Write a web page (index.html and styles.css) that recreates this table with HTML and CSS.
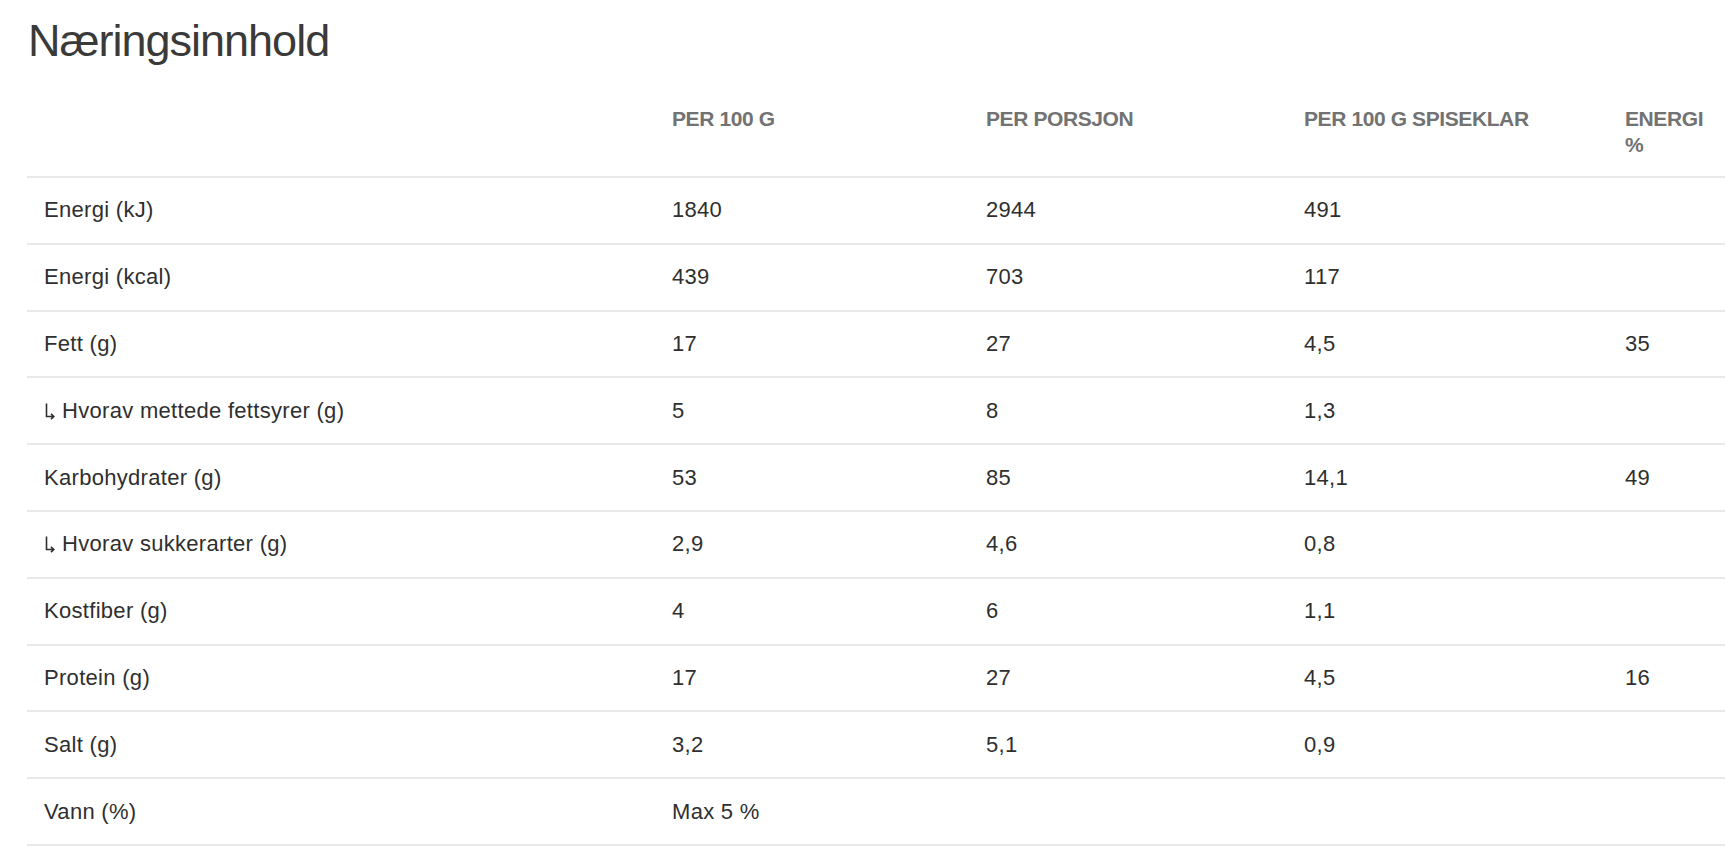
FILE: index.html
```html
<!DOCTYPE html>
<html lang="no">
<head>
<meta charset="utf-8">
<title>Næringsinnhold</title>
<link rel="stylesheet" href="styles.css">
</head>
<body>
<section class="nutrition">
  <h2 class="nutrition__title">Næringsinnhold</h2>
  <div class="ntable">
    <div class="ntable__row ntable__row--head">
      <div class="ntable__cell"></div>
      <div class="ntable__cell">PER 100 G</div>
      <div class="ntable__cell">PER PORSJON</div>
      <div class="ntable__cell">PER 100 G SPISEKLAR</div>
      <div class="ntable__cell">ENERGI %</div>
    </div>
    <div class="ntable__row">
      <div class="ntable__cell">Energi (kJ)</div>
      <div class="ntable__cell">1840</div>
      <div class="ntable__cell">2944</div>
      <div class="ntable__cell">491</div>
      <div class="ntable__cell"></div>
    </div>
    <div class="ntable__row">
      <div class="ntable__cell">Energi (kcal)</div>
      <div class="ntable__cell">439</div>
      <div class="ntable__cell">703</div>
      <div class="ntable__cell">117</div>
      <div class="ntable__cell"></div>
    </div>
    <div class="ntable__row">
      <div class="ntable__cell">Fett (g)</div>
      <div class="ntable__cell">17</div>
      <div class="ntable__cell">27</div>
      <div class="ntable__cell">4,5</div>
      <div class="ntable__cell">35</div>
    </div>
    <div class="ntable__row">
      <div class="ntable__cell"><svg class="ntable__sub" viewBox="0 0 12 20" aria-hidden="true"><path d="M2.5 1.5 V14.5 H9.5 M7 11.8 L9.8 14.5 L7 17.2"/></svg>Hvorav mettede fettsyrer (g)</div>
      <div class="ntable__cell">5</div>
      <div class="ntable__cell">8</div>
      <div class="ntable__cell">1,3</div>
      <div class="ntable__cell"></div>
    </div>
    <div class="ntable__row">
      <div class="ntable__cell">Karbohydrater (g)</div>
      <div class="ntable__cell">53</div>
      <div class="ntable__cell">85</div>
      <div class="ntable__cell">14,1</div>
      <div class="ntable__cell">49</div>
    </div>
    <div class="ntable__row">
      <div class="ntable__cell"><svg class="ntable__sub" viewBox="0 0 12 20" aria-hidden="true"><path d="M2.5 1.5 V14.5 H9.5 M7 11.8 L9.8 14.5 L7 17.2"/></svg>Hvorav sukkerarter (g)</div>
      <div class="ntable__cell">2,9</div>
      <div class="ntable__cell">4,6</div>
      <div class="ntable__cell">0,8</div>
      <div class="ntable__cell"></div>
    </div>
    <div class="ntable__row">
      <div class="ntable__cell">Kostfiber (g)</div>
      <div class="ntable__cell">4</div>
      <div class="ntable__cell">6</div>
      <div class="ntable__cell">1,1</div>
      <div class="ntable__cell"></div>
    </div>
    <div class="ntable__row">
      <div class="ntable__cell">Protein (g)</div>
      <div class="ntable__cell">17</div>
      <div class="ntable__cell">27</div>
      <div class="ntable__cell">4,5</div>
      <div class="ntable__cell">16</div>
    </div>
    <div class="ntable__row">
      <div class="ntable__cell">Salt (g)</div>
      <div class="ntable__cell">3,2</div>
      <div class="ntable__cell">5,1</div>
      <div class="ntable__cell">0,9</div>
      <div class="ntable__cell"></div>
    </div>
    <div class="ntable__row">
      <div class="ntable__cell">Vann (%)</div>
      <div class="ntable__cell">Max 5 %</div>
      <div class="ntable__cell"></div>
      <div class="ntable__cell"></div>
      <div class="ntable__cell"></div>
    </div>
  </div>
</section>
</body>
</html>
```

FILE: styles.css
```css
html, body {
  margin: 0;
  padding: 0;
  background: #ffffff;
}

body {
  font-family: "Liberation Sans", Arial, sans-serif;
  color: #2f2f2f;
}

.nutrition {
  padding: 14px 5px 0 27px;
}

.nutrition__title {
  margin: 0;
  font-size: 45px;
  line-height: 54px;
  font-weight: 400;
  letter-spacing: -1px;
  color: #3a3a3a;
  padding-left: 1px;
}

.ntable {
  margin-top: 38px;
  width: 1698px;
}

.ntable__row {
  display: grid;
  grid-template-columns: 628px 314px 318px 321px 1fr;
  align-items: center;
  height: 66.8px;
  box-sizing: border-box;
  border-bottom: 2px solid #e9e9e9;
  font-size: 22px;
  line-height: 26px;
  letter-spacing: 0.3px;
}

.ntable__row--head {
  height: auto;
  align-items: start;
  padding-bottom: 18px;
  font-size: 21px;
  line-height: 26px;
  font-weight: 700;
  color: #727272;
  letter-spacing: -0.4px;
}

.ntable__cell {
  padding: 0 17px;
}

.ntable__sub {
  display: inline-block;
  width: 12px;
  height: 20px;
  margin-right: 6px;
  vertical-align: -4px;
  fill: none;
  stroke: #2f2f2f;
  stroke-width: 1.6;
}
```
